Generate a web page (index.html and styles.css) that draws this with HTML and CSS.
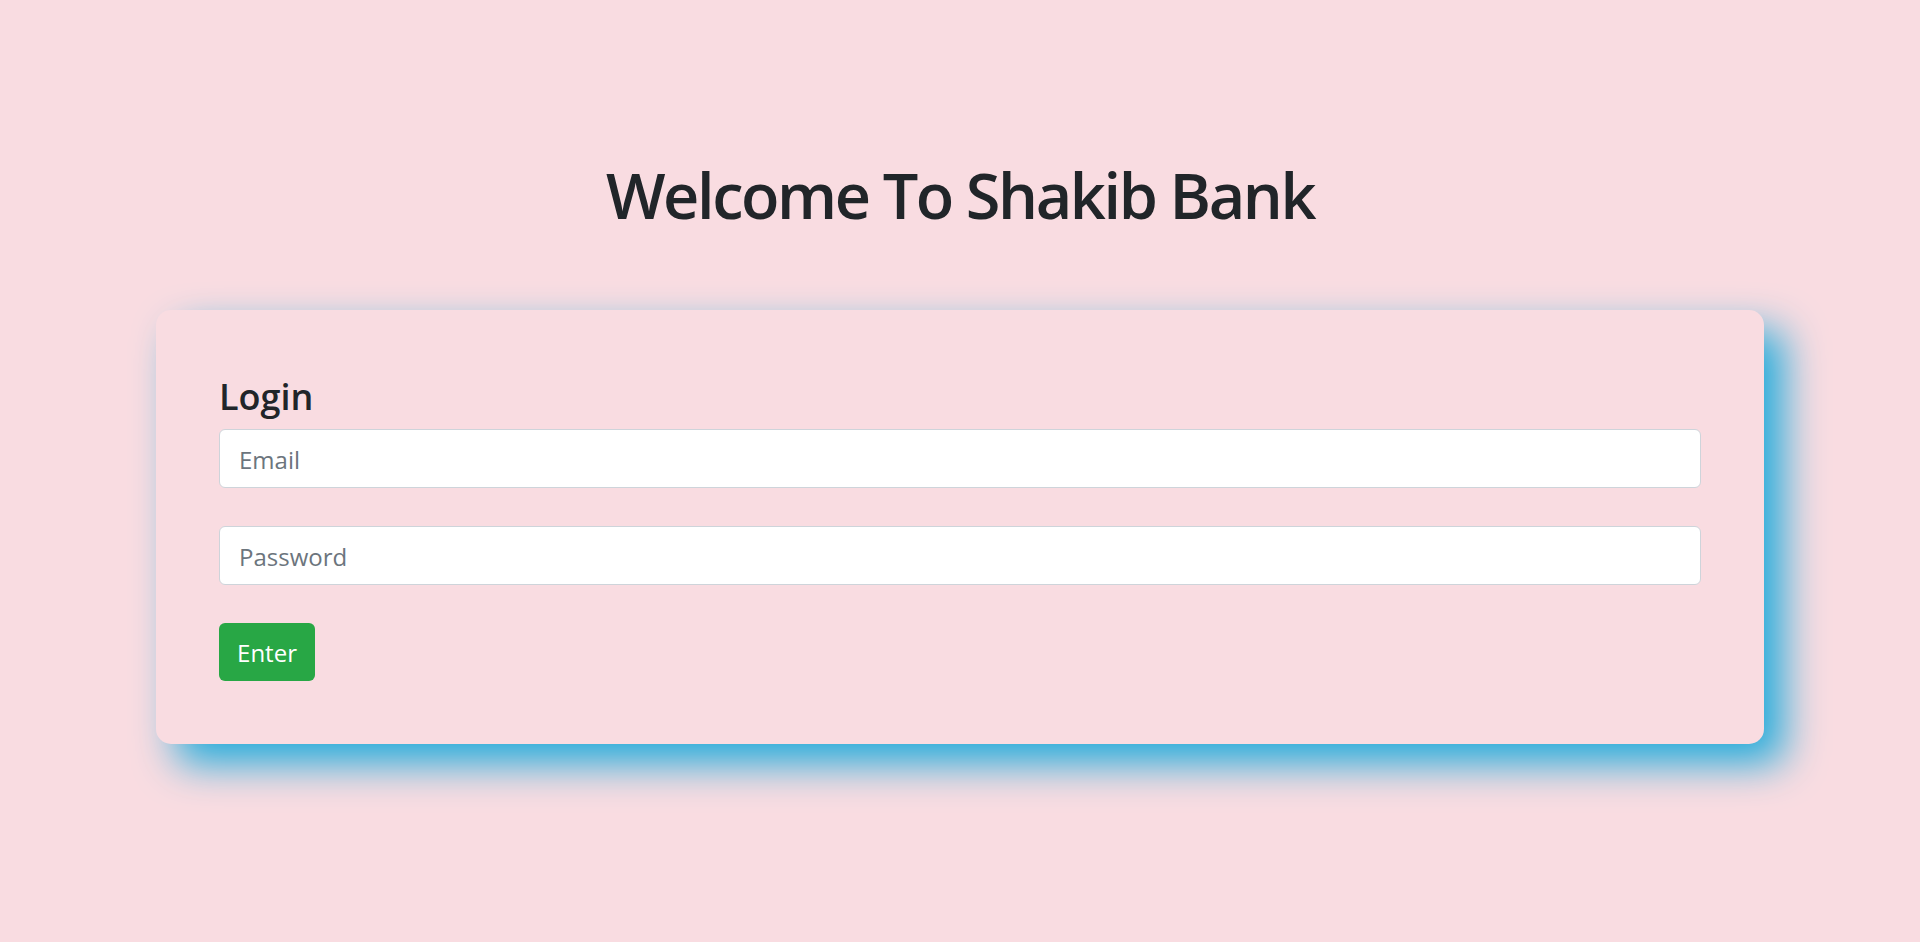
FILE: index.html
```html
<!DOCTYPE html>
<html lang="en">
<head>
<meta charset="utf-8">
<title>Shakib Bank</title>
<link rel="stylesheet" href="styles.css">
</head>
<body>
  <h1 class="title">Welcome To Shakib Bank</h1>
  <div class="card">
    <h4 class="card-title">Login</h4>
    <form class="login-form">
      <input class="field" type="email" placeholder="Email">
      <input class="field" type="password" placeholder="Password">
      <button class="btn-enter" type="button">Enter</button>
    </form>
  </div>
</body>
</html>
```
FILE: styles.css
```css
* { box-sizing: border-box; }
html, body { margin: 0; padding: 0; }
body {
  background: #f9dce1;
  font-family: "Open Sans", "Noto Sans", sans-serif;
  color: #212529;
  min-height: 942px;
}
.title {
  margin: 0;
  padding-top: 157px;
  font-size: 63px;
  line-height: 1.2;
  font-weight: 600;
  letter-spacing: -2.4px;
  text-align: center;
  color: #212529;
}
.card {
  margin: 77px 156px 0;
  padding: 63px;
  border-radius: 15px;
  background: #f9dce1;
  box-shadow: 20px 20px 40px #23acdb;
}
.card-title {
  margin: 2px 0 11px;
  font-size: 36px;
  line-height: 1.2;
  font-weight: 600;
  letter-spacing: 0;
}
.login-form {
  display: flex;
  flex-direction: column;
  align-items: flex-start;
  gap: 38px;
}
.field {
  width: 100%;
  height: 59px;
  padding: 3px 19px 0;
  border: 1.5px solid #ced4da;
  border-radius: 6px;
  background: #fff;
  font-family: inherit;
  font-size: 24px;
  color: #495057;
  outline: none;
}
.field::placeholder { color: #6c757d; opacity: 1; }
.btn-enter {
  width: 96px;
  height: 58px;
  padding: 2px 0 0;
  border: 0;
  border-radius: 6px;
  background: #28a745;
  color: #fff;
  font-family: inherit;
  font-size: 24px;
  cursor: pointer;
}
```
